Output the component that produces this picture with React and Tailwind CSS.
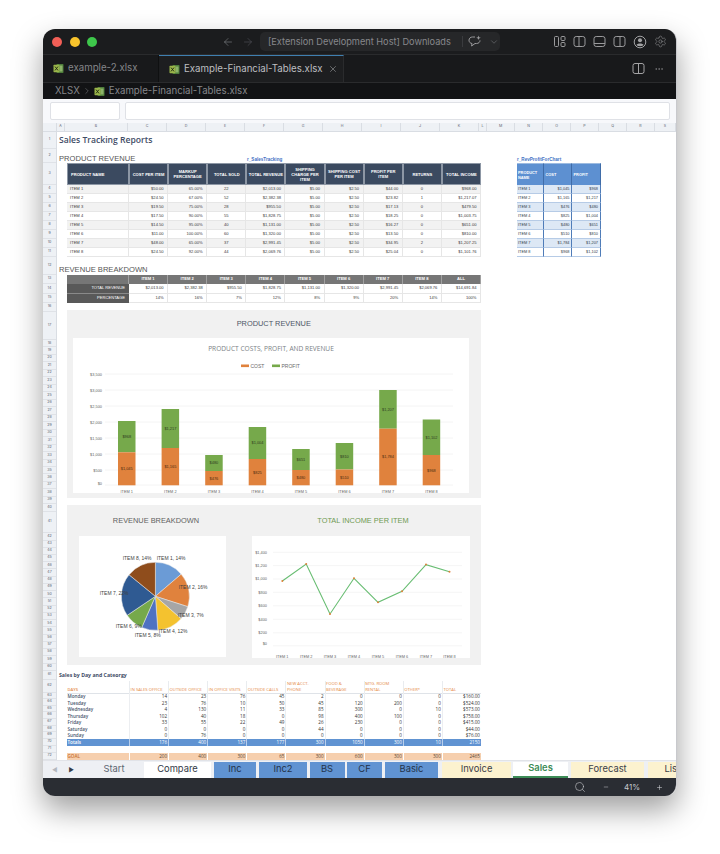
import { ArrowLeft, ArrowRight, ChevronDown, ChevronRight, Ellipsis, Minus, Plus, Search, Settings, X } from 'lucide-react'

const colLabels = [
  ['A', 'w-[8px]'], ['B', 'w-[63px]'], ['C', 'w-[39px]'], ['D', 'w-[39px]'], ['E', 'w-[39px]'], ['F', 'w-[39px]'],
  ['G', 'w-[39px]'], ['H', 'w-[39px]'], ['I', 'w-[39px]'], ['J', 'w-[39px]'], ['K', 'w-[39px]'], ['L', 'w-[8px]'],
  ['M', 'w-[28px]'], ['N', 'w-[28px]'], ['O', 'w-[28px]'], ['P', 'w-[28px]'], ['Q', 'w-[28px]'], ['R', 'w-[28px]'], ['S', 'w-[21px]'],
]

// row heights in px, row number = index + 1
const rowHeights = [
  17, 14, 22, 9, 9, 9, 9, 9, 9, 9, 9, 18, 9, 9.5, 9.5, 9, 28,
  ...Array(23).fill(7.48), 21.5, ...Array(19).fill(7.24),
  9.7, 12.3, ...Array(7).fill(6.57), 7.5, 6.5, 7,
]

const products = [
  ['ITEM 1', '$50.00', '65.00%', '22', '$2,013.00', '$5.00', '$2.50', '$44.00', '0', '$968.00'],
  ['ITEM 2', '$24.50', '67.00%', '52', '$2,382.38', '$5.00', '$2.50', '$23.82', '1', '$1,217.07'],
  ['ITEM 3', '$19.50', '75.00%', '28', '$955.50', '$5.00', '$2.50', '$17.13', '0', '$479.50'],
  ['ITEM 4', '$17.50', '90.00%', '55', '$1,828.75', '$5.00', '$2.50', '$18.25', '0', '$1,003.75'],
  ['ITEM 5', '$14.50', '95.00%', '40', '$1,131.00', '$5.00', '$2.50', '$16.27', '0', '$651.00'],
  ['ITEM 6', '$11.00', '100.00%', '60', '$1,320.00', '$5.00', '$2.50', '$13.50', '0', '$810.00'],
  ['ITEM 7', '$48.00', '65.00%', '37', '$2,991.45', '$5.00', '$2.50', '$34.95', '2', '$1,207.25'],
  ['ITEM 8', '$24.50', '92.00%', '44', '$2,069.76', '$5.00', '$2.50', '$25.04', '0', '$1,101.76'],
]

const productHead = ['PRODUCT NAME', 'COST PER ITEM', 'MARKUP PERCENTAGE', 'TOTAL SOLD', 'TOTAL REVENUE', 'SHIPPING CHARGE PER ITEM', 'SHIPPING COST PER ITEM', 'PROFIT PER ITEM', 'RETURNS', 'TOTAL INCOME']

const chartRows = [
  ['ITEM 1', '$1,045', '$968'], ['ITEM 2', '$1,165', '$1,217'], ['ITEM 3', '$476', '$480'], ['ITEM 4', '$825', '$1,004'],
  ['ITEM 5', '$480', '$651'], ['ITEM 6', '$510', '$810'], ['ITEM 7', '$1,784', '$1,207'], ['ITEM 8', '$968', '$1,102'],
]

const breakdownHead = ['', 'ITEM 1', 'ITEM 2', 'ITEM 3', 'ITEM 4', 'ITEM 5', 'ITEM 6', 'ITEM 7', 'ITEM 8', 'ALL']
const revenueRow = ['$2,013.00', '$2,382.38', '$955.50', '$1,828.75', '$1,131.00', '$1,320.00', '$2,991.45', '$2,069.76', '$14,691.84']
const percentRow = ['14%', '16%', '7%', '12%', '8%', '9%', '20%', '14%', '100%']

const bars = [
  { x: 118, top: 421, mid: 452.3, cost: '$1,045', profit: '$968', label: 'ITEM 1' },
  { x: 161.6, top: 409, mid: 448, cost: '$1,165', profit: '$1,217', label: 'ITEM 2' },
  { x: 205.2, top: 455, mid: 471, cost: '$476', profit: '$480', label: 'ITEM 3' },
  { x: 248.7, top: 427, mid: 459, cost: '$825', profit: '$1,004', label: 'ITEM 4' },
  { x: 292.2, top: 449, mid: 470, cost: '$480', profit: '$651', label: 'ITEM 5' },
  { x: 335.7, top: 443, mid: 469.5, cost: '$510', profit: '$810', label: 'ITEM 6' },
  { x: 379.2, top: 390, mid: 428.7, cost: '$1,784', profit: '$1,207', label: 'ITEM 7' },
  { x: 422.7, top: 419.5, mid: 455, cost: '$968', profit: '$1,102', label: 'ITEM 8' },
]

const barAxis = [['$3,500', 374], ['$3,000', 390], ['$2,500', 406], ['$2,000', 422], ['$1,500', 438], ['$1,000', 454], ['$500', 470], ['$0', 485]]

const pieValues = [
  [2013, '#6b9bd6'], [2382.38, '#e0823d'], [955.5, '#a6a6a6'], [1828.75, '#f4c22f'],
  [1131, '#4f72c2'], [1320, '#76a94b'], [2991.45, '#2f5a92'], [2069.76, '#8f4d1c'],
]
const pieLabels = [
  ['ITEM 8, 14%', 123, 560], ['ITEM 1, 14%', 157, 560], ['ITEM 2, 16%', 179, 589], ['ITEM 3, 7%', 178, 617],
  ['ITEM 4, 12%', 159, 633], ['ITEM 5, 8%', 135, 637], ['ITEM 6, 9%', 116, 628], ['ITEM 7, 22%', 100, 595],
]

const linePoints = [[282.3, 580.7], [306.2, 563.7], [330, 613.7], [354, 578], [378, 602], [402, 591], [426, 564.3], [449.5, 571.5]]
const lineAxis = [['$1,400', 552], ['$1,200', 565.3], ['$1,000', 578.7], ['$800', 592], ['$600', 605.5], ['$400', 619], ['$200', 632.5], ['$0', 643.5]]

const salesHead = ['DAYS', 'IN SALES OFFICE', 'OUTSIDE OFFICE', 'IN OFFICE VISITS', 'OUTSIDE CALLS', 'NEW ACCT.\nPHONE', 'FOOD &\nBEVERAGE', 'MTG. ROOM\nRENTAL', 'OTHER*', 'TOTAL']
const salesRows = [
  ['Monday', '14', '23', '76', '45', '2', '0', '0', '0', '$160.00'],
  ['Tuesday', '23', '76', '10', '50', '45', '120', '200', '0', '$524.00'],
  ['Wednesday', '4', '130', '11', '33', '85', '300', '0', '10', '$573.00'],
  ['Thursday', '102', '40', '18', '0', '98', '400', '100', '0', '$758.00'],
  ['Friday', '33', '55', '22', '49', '26', '230', '0', '0', '$415.00'],
  ['Saturday', '0', '0', '0', '0', '44', '0', '0', '0', '$44.00'],
  ['Sunday', '0', '76', '0', '0', '0', '0', '0', '0', '$76.00'],
]
const totalsRow = ['Totals', '176', '400', '137', '177', '300', '1050', '300', '10', '2150']
const goalRow = ['GOAL', '200', '400', '300', '65', '300', '600', '300', '300', '2465']

const sheetTabs = [
  ['Compare', 'w-[67px] ml-0 bg-white text-[#333b47]'],
  ['Inc', 'w-[42px] ml-[3px] bg-[#6093d2] text-[#24334a]'],
  ['Inc2', 'w-[48px] ml-[3px] bg-[#6093d2] text-[#24334a]'],
  ['BS', 'w-[35px] ml-[2.5px] bg-[#6093d2] text-[#24334a]'],
  ['CF', 'w-[35px] ml-[2.5px] bg-[#6093d2] text-[#24334a]'],
  ['Basic', 'w-[53px] ml-[3px] bg-[#6093d2] text-[#24334a]'],
  ['Invoice', 'w-[69px] ml-[4px] bg-[#fcf2cf] text-[#3d4148]'],
]

function ExcelIcon() {
  return (
    <svg width="11" height="11" viewBox="0 0 11 11" className="shrink-0">
      <rect x="3.5" y="1" width="7" height="9" rx="0.8" fill="#4d7c3a" />
      <rect x="6.5" y="2.5" width="3" height="6" fill="#8db36a" />
      <rect x="0.5" y="1.8" width="6" height="7.4" rx="0.6" fill="#9ab54a" />
      <path d="M2 3.6 L5 7.4 M5 3.6 L2 7.4" stroke="#1f2a12" strokeWidth="0.9" />
    </svg>
  )
}

function PanelIcon({ d }) {
  return (
    <svg width="13" height="13" viewBox="0 0 13 13" fill="none" stroke="#9a9a9c" strokeWidth="1">
      <rect x="1" y="1.5" width="11" height="10" rx="2.2" />
      <path d={d} />
    </svg>
  )
}

function TitleBar() {
  return (
    <div className="h-[26px] shrink-0 flex items-center bg-[#1b1c1e] border-b border-[#2a2b2d]">
      <div className="flex items-center gap-[7.5px] pl-[9px]">
        <span className="w-[10px] h-[10px] rounded-full bg-[#f25f57]" />
        <span className="w-[10px] h-[10px] rounded-full bg-[#f8c32c]" />
        <span className="w-[10px] h-[10px] rounded-full bg-[#3ec74b]" />
      </div>
      <ArrowLeft className="ml-[125px] text-[#85868a]" size={12} strokeWidth={1.2} />
      <ArrowRight className="ml-[8px] text-[#55565a]" size={12} strokeWidth={1.2} />
      <div className="ml-[6px] w-[240px] h-[19px] shrink-0 flex items-center rounded-[5px] bg-[#262729] pl-[8px]">
        <span className="text-[9.2px] text-[#87888c] whitespace-nowrap">[Extension Development Host] Downloads</span>
        <span className="ml-[11px] h-[11px] w-px shrink-0 bg-[#3a3b3e]" />
        <svg className="ml-[5px] shrink-0" width="14" height="13" viewBox="0 0 14 13" fill="none" stroke="#9a9a9c" strokeWidth="1">
          <path d="M7 2 H4.5 C2.5 2 1 3.3 1 5.2 C1 7 2.3 8.4 4 8.5 L3.6 11 L7 8.5 H8.5 C10.5 8.5 12 7.2 12 5.4" />
          <path d="M10.5 0.5 L11.1 2.2 L12.8 2.8 L11.1 3.4 L10.5 5 L9.9 3.4 L8.2 2.8 L9.9 2.2 Z" fill="#9a9a9c" stroke="none" />
        </svg>
        <ChevronDown className="ml-[7px] shrink-0 text-[#85868a]" size={10} strokeWidth={1.2} />
      </div>
      <div className="ml-[53px] flex items-center gap-[7px]">
        <svg width="13" height="13" viewBox="0 0 13 13" fill="none" stroke="#9a9a9c" strokeWidth="1">
          <rect x="1.5" y="1.5" width="4" height="10" rx="1" />
          <rect x="8" y="1.5" width="4" height="4" rx="1" />
          <rect x="8" y="7.5" width="4" height="4" rx="1" />
        </svg>
        <PanelIcon d="M6 1.5 V11.5" />
        <PanelIcon d="M1 8.5 H12" />
        <PanelIcon d="M7 1.5 V11.5" />
        <svg width="14" height="14" viewBox="0 0 14 14" fill="none" stroke="#a3a3a5" strokeWidth="1">
          <circle cx="7" cy="7" r="5.8" />
          <circle cx="7" cy="5.2" r="2" fill="#a3a3a5" stroke="none" />
          <path d="M3.5 10 C4 8 10 8 10.5 10 C9 11.6 5 11.6 3.5 10 Z" fill="#a3a3a5" stroke="none" />
        </svg>
        <Settings className="text-[#9a9a9c]" size={13} strokeWidth={1} />
      </div>
    </div>
  )
}

function EditorTabs() {
  return (
    <div className="h-[28px] shrink-0 flex items-stretch bg-[#18191b] border-b border-[#2a2b2d]">
      <div className="w-[116px] flex items-center gap-[4px] pl-[10px] border-r border-[#0f1011]">
        <ExcelIcon />
        <span className="text-[9.7px] text-[#85868a]">example-2.xlsx</span>
      </div>
      <div className="w-[185px] flex items-center gap-[4px] pl-[10px] bg-[#1d1e20] border-t border-[#3f7fb0] border-r border-r-[#2a2b2d]">
        <ExcelIcon />
        <span className="text-[9.7px] text-[#bdbec0] whitespace-nowrap">Example-Financial-Tables.xlsx</span>
        <X className="ml-[1px] text-[#b5b6b8]" size={10} strokeWidth={1.2} />
      </div>
      <div className="ml-auto flex items-center gap-[9px] pr-[12px]">
        <svg width="13" height="13" viewBox="0 0 13 13" fill="none" stroke="#a3a3a5" strokeWidth="1">
          <rect x="1" y="1.5" width="11" height="10" rx="2" />
          <path d="M6.5 1.5 V11.5" />
        </svg>
        <Ellipsis className="text-[#8b8c8f]" size={10} strokeWidth={1.5} />
      </div>
    </div>
  )
}

function Breadcrumb() {
  return (
    <div className="h-[16px] shrink-0 flex items-center bg-[#121315] pl-[12px]">
      <span className="text-[9.7px] text-[#85868a]">XLSX</span>
      <ChevronRight className="mx-[2px] text-[#85868a]" size={10} strokeWidth={1.2} />
      <ExcelIcon />
      <span className="ml-[4px] text-[9.7px] text-[#85868a] whitespace-nowrap">Example-Financial-Tables.xlsx</span>
    </div>
  )
}

function FormulaBar() {
  return (
    <div className="h-[24px] shrink-0 flex items-center gap-[5px] pl-[7px] pr-[6px] bg-[#f7f8fb]">
      <div className="w-[70px] h-[18px] bg-white border border-[#dfe1e6] rounded-[2px]" />
      <div className="flex-1 h-[18px] bg-white border border-[#dfe1e6] rounded-[2px]" />
    </div>
  )
}

function ColumnHeaders() {
  return (
    <div className="h-[9px] shrink-0 flex bg-[#eef1f5] border-b border-[#d9dde3]">
      <div className="w-[14px] shrink-0 border-r border-[#d9dde3]" />
      {colLabels.map(([label, w]) => (
        <div key={label} className={`${w} shrink-0 flex items-center justify-center border-r border-[#d9dde3] text-[3.6px] text-[#5a6270]`}>
          {label}
        </div>
      ))}
    </div>
  )
}

function RowGutter() {
  return (
    <div className="w-[14px] shrink-0 bg-[#eef1f5] border-r border-[#d9dde3]">
      {rowHeights.map((h, i) => (
        <div key={i} style={{ height: h }} className="flex items-center justify-center border-b border-[#dfe2e7] text-[3.6px] text-[#5a6270]">
          {i + 1}
        </div>
      ))}
    </div>
  )
}

function ProductTable() {
  return (
    <div className="w-[414.5px] shrink-0 grid grid-cols-[62.5px_repeat(9,39.11px)] grid-rows-[22px_repeat(8,9px)] font-['Liberation_Sans',sans-serif] text-[4.1px]">
      {productHead.map((h, i) => (
        <div key={h} className={`flex items-center bg-[#3b4a60] border border-[#8d97a5] font-bold text-white leading-[5px] ${i === 0 ? 'pl-[3.5px]' : 'justify-center text-center px-[1px]'}`}>
          {h}
        </div>
      ))}
      {products.map((row, r) =>
        row.map((cell, c) => (
          <div key={c} className={`flex items-center border-r border-b border-[#e6e6e6] text-[#3a3a3a] ${r % 2 === 0 ? 'bg-[#f2f2f2]' : 'bg-white'} ${c === 0 ? 'pl-[3.5px]' : c === 3 || c === 8 ? 'justify-center' : 'justify-end pr-[3.5px]'}`}>
            {cell}
          </div>
        ))
      )}
    </div>
  )
}

function ChartDataTable() {
  return (
    <div className="w-[84px] shrink-0 grid grid-cols-[27.5px_28px_28.5px] grid-rows-[22px_repeat(8,9px)] font-['Liberation_Sans',sans-serif] text-[3.9px]">
      {['PRODUCT NAME', 'COST', 'PROFIT'].map(h => (
        <div key={h} className="flex items-center pl-[1.5px] bg-[#5d90d1] border-r border-[#3f6ca8] border-t border-t-[#9dbbe0] font-bold text-white leading-[5px]">
          {h}
        </div>
      ))}
      {chartRows.map((row, r) =>
        row.map((cell, c) => (
          <div key={c} className={`flex items-center border-r border-[#4f7cb8] border-b border-b-[#b6cbe6] text-[#333c4a] ${r % 2 === 0 ? 'bg-[#dde8f5]' : 'bg-white'} ${c === 0 ? 'pl-[1.5px]' : 'justify-end pr-[1.5px]'}`}>
            {cell}
          </div>
        ))
      )}
    </div>
  )
}

function BreakdownTable() {
  return (
    <div className="w-[414.5px] grid grid-cols-[62.5px_repeat(9,39.11px)] grid-rows-[9px_9.5px_9.5px] font-['Liberation_Sans',sans-serif] text-[4.1px]">
      {breakdownHead.map((h, i) => (
        <div key={i} className="flex items-center justify-center bg-[#767676] border-r border-[#a0a0a0] font-bold text-white">{h}</div>
      ))}
      <div className="flex items-center justify-end pr-[4px] bg-[#595959] border-b border-[#8a8a8a] text-white">TOTAL REVENUE</div>
      {revenueRow.map((v, i) => (
        <div key={i} className="flex items-center justify-end pr-[3.5px] border-r border-b border-[#e6e6e6] text-[#3a3a3a]">{v}</div>
      ))}
      <div className="flex items-center justify-end pr-[4px] bg-[#595959] text-white">PERCENTAGE</div>
      {percentRow.map((v, i) => (
        <div key={i} className="flex items-center justify-end pr-[3.5px] border-r border-b border-[#e6e6e6] text-[#3a3a3a]">{v}</div>
      ))}
    </div>
  )
}

function BarChart() {
  return (
    <svg className="block" width="396" height="155" viewBox="73 338 396 155" fontFamily="'Liberation Sans', sans-serif">
      <text x="271" y="350.5" textAnchor="middle" fontSize="6.6" fill="#7b7f86" fontFamily="'Open Sans', sans-serif">PRODUCT COSTS, PROFIT, AND REVENUE</text>
      <rect x="241" y="364.5" width="8" height="2.6" fill="#e0823d" />
      <text x="250.5" y="368" fontSize="5" fill="#6b6b6b">COST</text>
      <rect x="272" y="364.5" width="8" height="2.6" fill="#76a94b" />
      <text x="281.5" y="368" fontSize="5" fill="#6b6b6b">PROFIT</text>
      {barAxis.map(([label, y]) => (
        <g key={label}>
          <line x1="105" x2="453" y1={y} y2={y} stroke="#f1f1f1" strokeWidth="0.8" />
          <text x="102" y={y === 485 ? 485 : y + 1.5} textAnchor="end" fontSize="3.9" fill="#5f5f5f">{label}</text>
        </g>
      ))}
      {bars.map(b => (
        <g key={b.label}>
          <rect x={b.x} y={b.top} width="17.5" height={b.mid - b.top} fill="#76a94b" />
          <rect x={b.x} y={b.mid} width="17.5" height={485.3 - b.mid} fill="#e0823d" />
          <text x={b.x + 8.75} y={(b.top + b.mid) / 2 + 1.4} textAnchor="middle" fontSize="3.9" fill="#2f3a22">{b.profit}</text>
          <text x={b.x + 8.75} y={(b.mid + 485.3) / 2 + 1.4} textAnchor="middle" fontSize="3.9" fill="#4a2c12">{b.cost}</text>
          <text x={b.x + 8.75} y="493" textAnchor="middle" fontSize="3.9" fill="#5f5f5f">{b.label}</text>
        </g>
      ))}
    </svg>
  )
}

function PieChart() {
  const cx = 155.7
  const cy = 596
  const radius = 34
  const total = pieValues.reduce((s, [v]) => s + v, 0)
  let acc = 0
  const slices = pieValues.map(([v, color]) => {
    const a0 = (acc / total) * Math.PI * 2
    acc += v
    const a1 = (acc / total) * Math.PI * 2
    const big = a1 - a0 > Math.PI ? 1 : 0
    const d = `M${cx} ${cy} L${cx + radius * Math.sin(a0)} ${cy - radius * Math.cos(a0)} A${radius} ${radius} 0 ${big} 1 ${cx + radius * Math.sin(a1)} ${cy - radius * Math.cos(a1)} Z`
    return { d, color }
  })
  return (
    <svg className="block" width="146.4" height="121" viewBox="79.3 535.7 146.4 121" fontFamily="'Liberation Sans', sans-serif">
      {slices.map(s => <path key={s.color} d={s.d} fill={s.color} stroke="#e8e8e8" strokeWidth="0.5" />)}
      {pieLabels.map(([label, x, y]) => (
        <text key={label} x={x} y={y} fontSize="5" fill="#3f3f3f">{label}</text>
      ))}
    </svg>
  )
}

function LineChart() {
  const labels = ['ITEM 1', 'ITEM 2', 'ITEM 3', 'ITEM 4', 'ITEM 5', 'ITEM 6', 'ITEM 7', 'ITEM 8']
  return (
    <svg className="block" width="218" height="122.3" viewBox="252 535.7 218 122.3" fontFamily="'Liberation Sans', sans-serif">
      {lineAxis.map(([label, y]) => (
        <g key={label}>
          <line x1="273" x2="462" y1={y + (label === '$0' ? 2 : 0)} y2={y + (label === '$0' ? 2 : 0)} stroke="#f2f2f2" strokeWidth="0.8" />
          <text x="267" y={y + 1.5} textAnchor="end" fontSize="3.9" fill="#5f5f5f">{label}</text>
        </g>
      ))}
      <polyline points={linePoints.map(p => p.join(',')).join(' ')} fill="none" stroke="#68bd72" strokeWidth="1.1" />
      {linePoints.map(([x, y], i) => (
        <g key={i}>
          <circle cx={x} cy={y} r="1" fill="#e0823d" />
          <text x={x} y="658" dy="-0.3" textAnchor="middle" fontSize="3.9" fill="#5f5f5f">{labels[i]}</text>
        </g>
      ))}
    </svg>
  )
}

function SalesTable() {
  const cols = 'grid grid-cols-[62.5px_repeat(9,39.11px)]'
  return (
    <div className="w-[414.5px] font-['Open_Sans',sans-serif] text-[4.6px] text-[#3f4a5c]">
      <div className={`${cols} h-[12.3px] text-[#e58a45] text-[4.2px] leading-[6px]`}>
        {salesHead.map((h, i) => (
          <div key={h} className={`flex items-end whitespace-pre-line pl-[0.5px] pb-[0.5px] border-b border-[#dfe3e8] ${i > 0 ? 'border-l border-l-[#e9ecef]' : 'pl-[1px] font-semibold'}`}>{h}</div>
        ))}
      </div>
      {salesRows.map(row => (
        <div key={row[0]} className={`${cols} h-[6.57px] leading-[6.57px]`}>
          {row.map((cell, i) => (
            <div key={i} className={i === 0 ? 'pl-[1px] font-semibold text-[#46546b]' : 'text-right pr-[1px] border-l border-[#eceef1] text-[#333]'}>{cell}</div>
          ))}
        </div>
      ))}
      <div className={`${cols} h-[7.5px] leading-[7.5px] bg-[#6093d2] text-white`}>
        {totalsRow.map((cell, i) => (
          <div key={i} className={i === 0 ? 'pl-[1px] font-semibold' : 'text-right pr-[1px] border-l border-[#b8cfec]'}>{cell}</div>
        ))}
      </div>
      <div className="h-[6.5px]" />
      <div className={`${cols} h-[7px] leading-[7px] bg-[#f6cfae] text-[#5a4634]`}>
        {goalRow.map((cell, i) => (
          <div key={i} className={i === 0 ? 'pl-[1px] font-semibold text-[#c9702e]' : 'text-right pr-[1px] border-l border-white'}>{cell}</div>
        ))}
      </div>
    </div>
  )
}

function Sheet() {
  return (
    <div className="h-[628px] shrink-0 flex overflow-hidden bg-white">
      <RowGutter />
      <div className="flex-1 flex flex-col min-w-0">
        <div className="h-[17px] pl-[2px] flex items-center font-['Open_Sans',sans-serif] text-[8.6px] font-semibold text-[#3f4d66] whitespace-nowrap">Sales Tracking Reports</div>

        <div className="h-[14px] flex items-end font-['Liberation_Sans',sans-serif] whitespace-nowrap">
          <span className="ml-[2px] w-[188px] text-[7.6px] leading-[9px] text-[#555]">PRODUCT REVENUE</span>
          <span className="w-[270px] text-[4.6px] leading-[6px] font-bold text-[#4472c4]">r_SalesTracking</span>
          <span className="text-[4.6px] leading-[6px] font-bold text-[#4472c4]">r_RevProfitForChart</span>
        </div>

        <div className="flex pl-[9.5px] gap-[35.5px]">
          <ProductTable />
          <ChartDataTable />
        </div>

        <div className="h-[18px] flex items-end pl-[2px] font-['Liberation_Sans',sans-serif] text-[7.6px] leading-[10px] text-[#555]">REVENUE BREAKDOWN</div>

        <div className="pl-[9.5px]"><BreakdownTable /></div>

        <div className="ml-[9.5px] mt-[7px] w-[414.5px] h-[188px] bg-[#f1f1f1]">
          <div className="h-[28px] flex items-center justify-center font-['Liberation_Sans',sans-serif] text-[7.4px] text-[#4d5566]">PRODUCT REVENUE</div>
          <div className="ml-[6.5px] w-[396px] h-[155px] bg-white"><BarChart /></div>
        </div>

        <div className="ml-[9.5px] mt-[7px] w-[414.5px] h-[160px] bg-[#f1f1f1] flex font-['Liberation_Sans',sans-serif]">
          <div className="ml-[12.8px] w-[146.4px]">
            <div className="h-[30.7px] pl-[7px] flex items-center justify-center text-[7.4px] text-[#5f5f5f] whitespace-nowrap">REVENUE BREAKDOWN</div>
            <div className="h-[121px] bg-white"><PieChart /></div>
          </div>
          <div className="ml-[26.3px] w-[218px]">
            <div className="h-[30.7px] pl-[4px] flex items-center justify-center text-[7.4px] text-[#6f9a52] whitespace-nowrap">TOTAL INCOME PER ITEM</div>
            <div className="h-[122.3px] bg-white"><LineChart /></div>
          </div>
        </div>

        <div className="mt-[6px] h-[9.7px] pl-[2px] flex items-center font-['Open_Sans',sans-serif] text-[5.2px] font-bold text-[#3f4d66] whitespace-nowrap">Sales by Day and Cateorgy</div>
        <div className="pl-[9.5px]"><SalesTable /></div>
      </div>
    </div>
  )
}

function SheetTabs() {
  return (
    <div className="h-[18px] shrink-0 flex items-center bg-[#eef0f4] overflow-hidden font-['Inter',sans-serif] text-[9.4px] whitespace-nowrap border-t border-[#e1e3e8]">
      <div className="w-[41px] shrink-0 flex items-center pl-[9px] gap-[11px] text-[6px]">
        <span className="text-[#b4b8be]">◀</span>
        <span className="text-[#333b47]">▶</span>
      </div>
      <div className="w-[60px] h-[16px] shrink-0 flex items-center justify-center text-[#5d6571]">Start</div>
      {sheetTabs.map(([name, cls]) => (
        <div key={name} className={`${cls} h-[16px] shrink-0 flex items-center justify-center`}>{name}</div>
      ))}
      <div className="w-[55px] h-[16px] ml-[2px] shrink-0 flex items-center justify-center bg-white border-b-2 border-[#3d8c57] font-semibold text-[#3d8c57]">Sales</div>
      <div className="w-[73px] h-[16px] ml-[3px] shrink-0 flex items-center justify-center bg-[#fcf2cf] text-[#3d4148]">Forecast</div>
      <div className="flex-1 h-[16px] ml-[3.5px] flex items-center pl-[17px] bg-[#fcf2cf] text-[#3d4148]">Lis</div>
    </div>
  )
}

function StatusBar() {
  return (
    <div className="h-[18px] shrink-0 flex items-center justify-end bg-[#2a2d33] pr-[13.5px] text-[#c9cbcf]">
      <Search size={12} strokeWidth={1.2} />
      <Minus className="ml-[17px]" size={6} strokeWidth={2} />
      <span className="ml-[15px] text-[8px] font-['Inter',sans-serif]">41%</span>
      <Plus className="ml-[15.5px]" size={7} strokeWidth={2} />
    </div>
  )
}

export default function App() {
  return (
    <div className="w-[720px] h-[854px] bg-white pl-[43px] pt-[29px] overflow-hidden font-['Inter',sans-serif]">
      <div className="w-[634px] h-[767px] flex flex-col overflow-hidden rounded-[12px] border-r border-[#c8c9cd] shadow-[0_14px_30px_rgba(0,0,0,0.38)]">
        <TitleBar />
        <EditorTabs />
        <Breadcrumb />
        <FormulaBar />
        <ColumnHeaders />
        <Sheet />
        <SheetTabs />
        <StatusBar />
      </div>
    </div>
  )
}
